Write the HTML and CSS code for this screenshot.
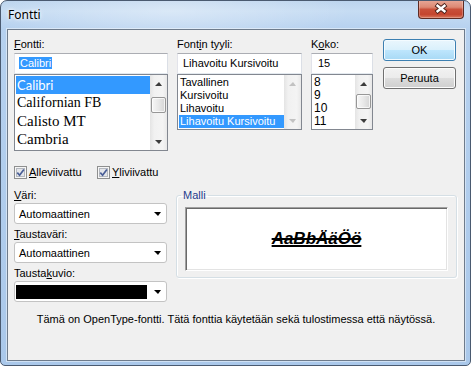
FILE: index.html
```html
<!DOCTYPE html>
<html lang="fi">
<head>
  <meta charset="UTF-8">
  <title>Fontti</title>
  <link rel="stylesheet" href="styles.css">
</head>
<body>

<div class="window">
  <div class="titlebar">
    <span class="title">Fontti</span>
    <div class="close">
      <svg width="44" height="18" viewBox="0 0 44 18">
        <path d="M17 4.5 L27 12.5 M27 4.5 L17 12.5" stroke="#4a211b" stroke-width="4.4" fill="none"/>
        <path d="M17.6 5 L26.4 12 M26.4 5 L17.6 12" stroke="#ffffff" stroke-width="2.4" fill="none"/>
      </svg>
    </div>
  </div>

  <div class="client">
    <div class="top">
      <!-- Fontti -->
      <div class="col col-font">
        <div class="label"><u>F</u>ontti:</div>
        <div class="field"><span class="mark">Calibri</span></div>
        <div class="list list-font">
          <div class="items">
            <div class="item sel f-calibri">Calibri</div>
            <div class="item f-californian">Californian FB</div>
            <div class="item f-calisto">Calisto MT</div>
            <div class="item f-cambria">Cambria</div>
          </div>
          <div class="scroll">
            <div class="arrow up"></div>
            <div class="track"><div class="thumb thumb-font"></div></div>
            <div class="arrow down"></div>
          </div>
        </div>
      </div>

      <!-- Fontin tyyli -->
      <div class="col col-style">
        <div class="label">Font<u>i</u>n tyyli:</div>
        <div class="field">Lihavoitu Kursivoitu</div>
        <div class="list list-small">
          <div class="items">
            <div class="item">Tavallinen</div>
            <div class="item">Kursivoitu</div>
            <div class="item">Lihavoitu</div>
            <div class="item sel">Lihavoitu Kursivoitu</div>
          </div>
          <div class="scroll">
            <div class="arrow up off"></div>
            <div class="track"></div>
            <div class="arrow down off"></div>
          </div>
        </div>
      </div>

      <!-- Koko -->
      <div class="col col-size">
        <div class="label">K<u>o</u>ko:</div>
        <div class="field field-size">15</div>
        <div class="list list-small">
          <div class="items">
            <div class="item num">8</div>
            <div class="item num">9</div>
            <div class="item num">10</div>
            <div class="item num">11</div>
          </div>
          <div class="scroll">
            <div class="arrow up"></div>
            <div class="track"><div class="thumb thumb-size"></div></div>
            <div class="arrow down"></div>
          </div>
        </div>
      </div>

      <div class="buttons">
        <button class="btn default">OK</button>
        <button class="btn">Peruuta</button>
      </div>
    </div>

    <div class="checks">
      <label class="check check-first">
        <svg class="cb" width="13" height="13" viewBox="0 0 13 13">
          <rect x="0.5" y="0.5" width="12" height="12" fill="#f6f6f6" stroke="#8e8f8f"/>
          <rect x="2.5" y="2.5" width="8" height="8" fill="#e4e6ea" stroke="#b4b8bf"/>
          <path d="M3.3 6.6 L5.6 9.2 L9.9 3.4" stroke="#4a5f97" stroke-width="1.7" fill="none"/>
        </svg>
        <span><u>A</u>lleviivattu</span>
      </label>
      <label class="check">
        <svg class="cb" width="13" height="13" viewBox="0 0 13 13">
          <rect x="0.5" y="0.5" width="12" height="12" fill="#f6f6f6" stroke="#8e8f8f"/>
          <rect x="2.5" y="2.5" width="8" height="8" fill="#e4e6ea" stroke="#b4b8bf"/>
          <path d="M3.3 6.6 L5.6 9.2 L9.9 3.4" stroke="#4a5f97" stroke-width="1.7" fill="none"/>
        </svg>
        <span><u>Y</u>liviivattu</span>
      </label>
    </div>

    <div class="lower">
      <div class="combos">
        <div class="combo-label first"><u>V</u>äri:</div>
        <div class="combo"><span>Automaattinen</span><span class="drop"></span></div>
        <div class="combo-label"><u>T</u>austaväri:</div>
        <div class="combo"><span>Automaattinen</span><span class="drop"></span></div>
        <div class="combo-label">Tausta<u>k</u>uvio:</div>
        <div class="combo combo-swatch"><span class="swatch"></span><span class="drop"></span></div>
      </div>

      <fieldset class="group">
        <legend>Malli</legend>
        <div class="sample"><span>AaBbÄäÖö</span></div>
      </fieldset>
    </div>

    <p class="info">Tämä on OpenType-fontti. Tätä fonttia käytetään sekä tulostimessa että näytössä.</p>
  </div>
</div>

</body>
</html>
```

FILE: styles.css
```css
body {
  margin: 0;
  background-color: #ffffff;
  font-family: "Liberation Sans", Arial, sans-serif;
  font-size: 11px;
  color: #000000;
}
.window {
  width: 471px;
  height: 366px;
  box-sizing: border-box;
  border: 1px solid #4a5a70;
  border-radius: 7px 7px 5px 5px;
  overflow: hidden;
  display: flex;
  flex-direction: column;
  background:
    radial-gradient(ellipse 180px 40px at 170px 10px, rgba(255,255,255,0.35), rgba(255,255,255,0)),
    linear-gradient(180deg, #bcd4ee 0, #c6dcf3 10px, #b6d1ef 28px, #aac8ea 100%);
}
.titlebar {
  height: 28px;
  flex: none;
  display: flex;
  justify-content: space-between;
  align-items: flex-start;
  padding-left: 7px;
}
.title {
  font-family: "Noto Sans", "Open Sans", sans-serif;
  font-size: 12px;
  line-height: 28px;
  color: #000000;
  text-shadow: 0 0 5px #ffffff, 0 0 3px #ffffff;
}
.close {
  width: 46px;
  height: 19px;
  box-sizing: border-box;
  margin: -1px 6px 0 0;
  border: 1px solid #5e2b23;
  border-top: none;
  border-radius: 0 0 4px 4px;
  background: linear-gradient(180deg, #e8a999 0, #dc8873 40%, #c9503a 52%, #c4452f 80%, #d9785d 100%);
  box-shadow: inset 0 0 0 1px rgba(255,255,255,0.25);
  display: flex;
}
.client {
  margin: 0 5px 0 6px;
  height: 332px;
  box-sizing: border-box;
  border: 1px solid #6e7b8b;
  background-color: #f0f0f0;
  padding: 8px 0 0 6px;
  box-shadow: 0 0 0 1px rgba(255,255,255,0.45);
}

/* top row */
.top {
  display: flex;
  align-items: flex-start;
  gap: 9px;
}
.col-font { width: 154px; }
.col-style { width: 125px; }
.col-size { width: 62px; }
.label {
  line-height: 13px;
  margin-bottom: 2px;
}
.field {
  height: 21px;
  box-sizing: border-box;
  border: 1px solid;
  border-color: #abadb3 #dbdfe6 #e3e9ef #e2e3ea;
  background-color: #ffffff;
  padding: 0 5px;
  line-height: 19px;
  white-space: nowrap;
}
.field-size { padding-left: 6px; }
.mark {
  display: inline-block;
  background-color: #3399ff;
  color: #ffffff;
  line-height: 12px;
  padding: 0 1px;
  margin-left: -1px;
}
.list {
  display: flex;
  box-sizing: border-box;
  border: 1px solid #828790;
  background-color: #ffffff;
}
.list-font { height: 77px; }
.list-small { height: 56px; }
.items {
  flex: 1;
  min-width: 0;
  padding: 1px 0 0 1px;
}
.item {
  white-space: nowrap;
  padding-left: 1px;
  height: 13px;
  line-height: 13px;
}
.list-font .item {
  height: 18px;
  line-height: 18px;
}
.item.sel {
  background-color: #3399ff;
  color: #ffffff;
}
.f-calibri { font-family: Lato, "Liberation Sans", sans-serif; font-size: 13px; }
.f-californian { font-family: "Liberation Serif", serif; font-size: 14px; }
.f-calisto { font-family: "Liberation Serif", serif; font-size: 15px; }
.f-cambria { font-family: "Liberation Serif", serif; font-size: 15px; }
.num { font-size: 12px; }

.scroll {
  width: 17px;
  flex: none;
  display: flex;
  flex-direction: column;
  background: linear-gradient(90deg, #e4e4e4 0, #f1f1f1 25%, #f4f4f4 75%, #e8e8e8 100%);
}
.arrow {
  height: 17px;
  flex: none;
  display: flex;
  align-items: center;
  justify-content: center;
}
.arrow::after {
  content: "";
  border-left: 4px solid transparent;
  border-right: 3px solid transparent;
}
.arrow.up::after { border-bottom: 4px solid #3c3c3c; }
.arrow.down::after { border-top: 4px solid #3c3c3c; }
.arrow.up.off::after { border-bottom-color: #c2c2c2; }
.arrow.down.off::after { border-top-color: #c2c2c2; }
.track {
  flex: 1;
  padding: 0 1px;
}
.thumb {
  box-sizing: border-box;
  border: 1px solid #979797;
  border-radius: 2px;
  background: linear-gradient(90deg, #f7f7f7 0, #e8e8e8 50%, #d5d5d5 100%);
  box-shadow: inset 0 0 0 1px rgba(255,255,255,0.7);
}
.thumb-font { height: 16px; margin-top: 5px; }
.thumb-size { height: 15px; margin-top: 2px; }

.buttons {
  width: 73px;
  margin-left: 1px;
  padding-top: 1px;
  display: flex;
  flex-direction: column;
  gap: 6px;
}
.btn {
  height: 22px;
  padding: 0;
  font: inherit;
  color: #000000;
  border: 1px solid #707070;
  border-radius: 3px;
  background: linear-gradient(180deg, #f2f2f2 0, #ebebeb 50%, #dddddd 50%, #cfcfcf 100%);
  box-shadow: inset 0 0 0 1px #fcfcfc;
}
.btn.default {
  border-color: #3c7fb1;
  background: linear-gradient(180deg, #eaf6fd 0, #d9f0fc 50%, #bee6fd 50%, #a7d9f5 100%);
  box-shadow: inset 0 0 0 1px #f3fbff;
}

/* checkboxes */
.checks {
  display: flex;
  margin-top: 15px;
  height: 13px;
}
.check {
  display: flex;
  align-items: center;
  gap: 2px;
  line-height: 13px;
}
.check-first { width: 83px; }
.cb { flex: none; display: block; }

/* lower part */
.lower {
  display: flex;
  align-items: flex-start;
  gap: 9px;
  margin-top: 10px;
}
.combos { width: 153px; }
.combo-label {
  line-height: 13px;
  margin: 4px 0 1px;
}
.combo-label.first { margin-top: 0; }
.combo {
  height: 21px;
  box-sizing: border-box;
  border: 1px solid #c3c3c3;
  border-radius: 3px;
  background-color: #ffffff;
  display: flex;
  align-items: center;
  justify-content: space-between;
  padding-left: 4px;
}
.combo-swatch { padding-left: 1px; }
.swatch {
  width: 131px;
  height: 14px;
  background-color: #000000;
}
.drop {
  width: 0;
  height: 0;
  margin-right: 5px;
  border-left: 4px solid transparent;
  border-right: 3px solid transparent;
  border-top: 4px solid #000000;
}
.group {
  width: 281px;
  box-sizing: border-box;
  margin: 0;
  min-width: 0;
  padding: 5px 8px 6px;
  border: 1px solid #d5dfe5;
  border-radius: 3px;
  box-shadow: inset 1px 1px 0 #ffffff, 1px 1px 0 #ffffff;
}
.group legend {
  padding: 0 2px;
  margin-left: -4px;
  line-height: 13px;
  color: #1e3c8c;
}
.sample {
  height: 64px;
  box-sizing: border-box;
  border: 1px solid;
  border-color: #a0a0a0 #ffffff #ffffff #a0a0a0;
  box-shadow: inset 1px 1px 0 #696969, inset -1px -1px 0 #e3e3e3;
  background-color: #ffffff;
  display: flex;
  align-items: center;
  justify-content: center;
}
.sample span {
  font-size: 17px;
  font-weight: bold;
  font-style: italic;
  line-height: 20px;
  text-decoration: underline line-through;
  text-decoration-thickness: 2px;
}
.info {
  margin: 11px 0 0 -6px;
  text-align: center;
  line-height: 13px;
}
```
